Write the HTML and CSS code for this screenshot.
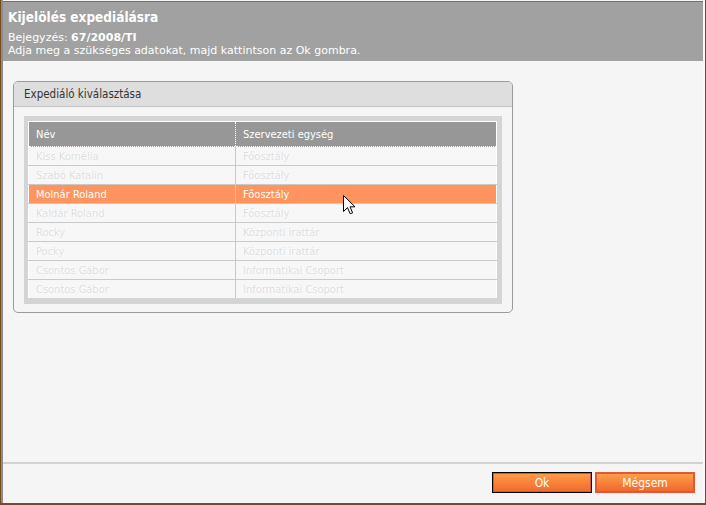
FILE: index.html
```html
<!DOCTYPE html>
<html lang="hu">
<head>
  <meta charset="UTF-8" />
  <title>Kijelölés expediálásra</title>
  <link rel="stylesheet" href="styles.css">
</head>
<body>
  <div class="window">
    <div class="frame">
      <!-- Header -->
      <div class="header">
        <h1>Kijelölés expediálásra</h1>
        <p>Bejegyzés: <b>67/2008/TI</b></p>
        <p>Adja meg a szükséges adatokat, majd kattintson az Ok gombra.</p>
      </div>

      <!-- Content -->
      <div class="content">
        <div class="panel">
          <div class="panel-title">Expediáló kiválasztása</div>
          <div class="grid-frame">
            <table class="grid">
              <thead>
                <tr><th class="col-name">Név</th><th>Szervezeti egység</th></tr>
              </thead>
              <tbody>
                <tr class="faded"><td>Kiss Kornélia</td><td>Főosztály</td></tr>
                <tr class="faded"><td>Szabó Katalin</td><td>Főosztály</td></tr>
                <tr class="selected"><td>Molnár Roland</td><td>Főosztály</td></tr>
                <tr class="faded"><td>Kaldár Roland</td><td>Főosztály</td></tr>
                <tr class="faded"><td>Rocky</td><td>Központi irattár</td></tr>
                <tr class="faded"><td>Pocky</td><td>Központi irattár</td></tr>
                <tr class="faded"><td>Csontos Gábor</td><td>Informatikai Csoport</td></tr>
                <tr class="faded"><td>Csontos Gábor</td><td>Informatikai Csoport</td></tr>
              </tbody>
            </table>
          </div>
        </div>
      </div>

      <!-- Footer buttons -->
      <div class="footer">
        <button class="btn btn-default">Ok</button>
        <button class="btn">Mégsem</button>
      </div>
    </div>

    <svg class="cursor" width="13" height="20" viewBox="0 0 13 20">
      <path d="M0.5 0.5 L0.5 16.5 L4.5 12.6 L7.2 18.8 L9.6 17.8 L7 11.8 L12 11.8 Z" fill="#fff" stroke="#000" stroke-width="1" stroke-linejoin="miter"/>
    </svg>
  </div>
</body>
</html>
```

FILE: styles.css
```css
html, body {
  margin: 0;
  padding: 0;
  background-color: #f5f5f5;
}

body {
  font-family: "DejaVu Sans Condensed", "DejaVu Sans", sans-serif;
  font-size: 11px;
}

.window {
  position: relative;
  width: 706px;
  height: 505px;
  box-sizing: border-box;
  border: solid #7a4a1f;
  border-width: 0 1px 2px 1px;
}

.frame {
  height: 100%;
  box-sizing: border-box;
  display: flex;
  flex-direction: column;
  border-left: 2px solid #8c8c8c;
  border-right: 2px solid #fafafa;
  background-color: #f5f5f5;
}

/* Header */
.header {
  margin-top: 1px;
  border-top: 1px solid #6f6f6f;
  background-color: #a1a1a1;
  color: #fff;
  padding: 7px 5px 4px;
}

.header h1 {
  margin: 0 0 6px;
  font-size: 13.5px;
  line-height: 16px;
  font-weight: bold;
}

.header p {
  margin: 0;
  font-family: "DejaVu Sans", sans-serif;
  font-size: 11px;
  line-height: 13px;
}

/* Content */
.content {
  flex: 1;
  padding: 20px 0 0 10px;
}

.panel {
  width: 500px;
  height: 232px;
  box-sizing: border-box;
  border: 1px solid #9b9b9b;
  border-radius: 5px;
}

.panel-title {
  height: 25px;
  box-sizing: border-box;
  line-height: 24px;
  padding-left: 10px;
  color: #333;
  font-size: 11.5px;
  background-color: #dedede;
  border-bottom: 1px solid #c2c2c2;
  border-radius: 4px 4px 0 0;
}

.grid-frame {
  margin: 9px 10px;
  padding: 5px 5px 5px 4px;
  background-color: #d4d4d4;
}

.grid {
  width: 469px;
  border-collapse: collapse;
  border-top: 1px solid #fff;
  border-left: 1px solid #fff;
  border-right: 1px solid #fff;
}

.grid th {
  height: 25px;
  box-sizing: border-box;
  padding: 0 7px;
  text-align: left;
  font-weight: normal;
  color: #fff;
  background-color: #979797;
  border-bottom: 1px dotted #fff;
}

.grid th.col-name {
  width: 207px;
  border-right: 1px dotted #fff;
}

.grid td {
  height: 18px;
  padding: 0 7px;
  background-color: #f7f7f7;
  border-bottom: 1px solid #c9c9c9;
  white-space: nowrap;
}

.grid td:first-child {
  border-right: 1px solid #c9c9c9;
}

.grid tr:last-child td {
  border-bottom: 1px solid #d4d4d4;
}

.faded td {
  color: #dedede;
  text-shadow: 0 0 2px #fff, 0 0 3px #fff;
}

.selected td {
  background-color: #ff945e;
  color: #fff;
}

/* Footer */
.footer {
  height: 41px;
  box-sizing: border-box;
  border-top: 2px solid #d2d2d2;
  padding: 8px 8px 0 0;
  display: flex;
  justify-content: flex-end;
  gap: 3px;
}

.btn {
  width: 100px;
  height: 21px;
  box-sizing: border-box;
  padding: 0;
  font-family: inherit;
  font-size: 12px;
  color: #fff;
  background: linear-gradient(#ff9e48, #f1682e);
  border: 2px solid #e15934;
  cursor: pointer;
}

.btn-default {
  border: 1px solid #000;
  box-shadow: inset 0 0 0 1px #d9552c;
}

.cursor {
  position: absolute;
  left: 342px;
  top: 195px;
}
```
